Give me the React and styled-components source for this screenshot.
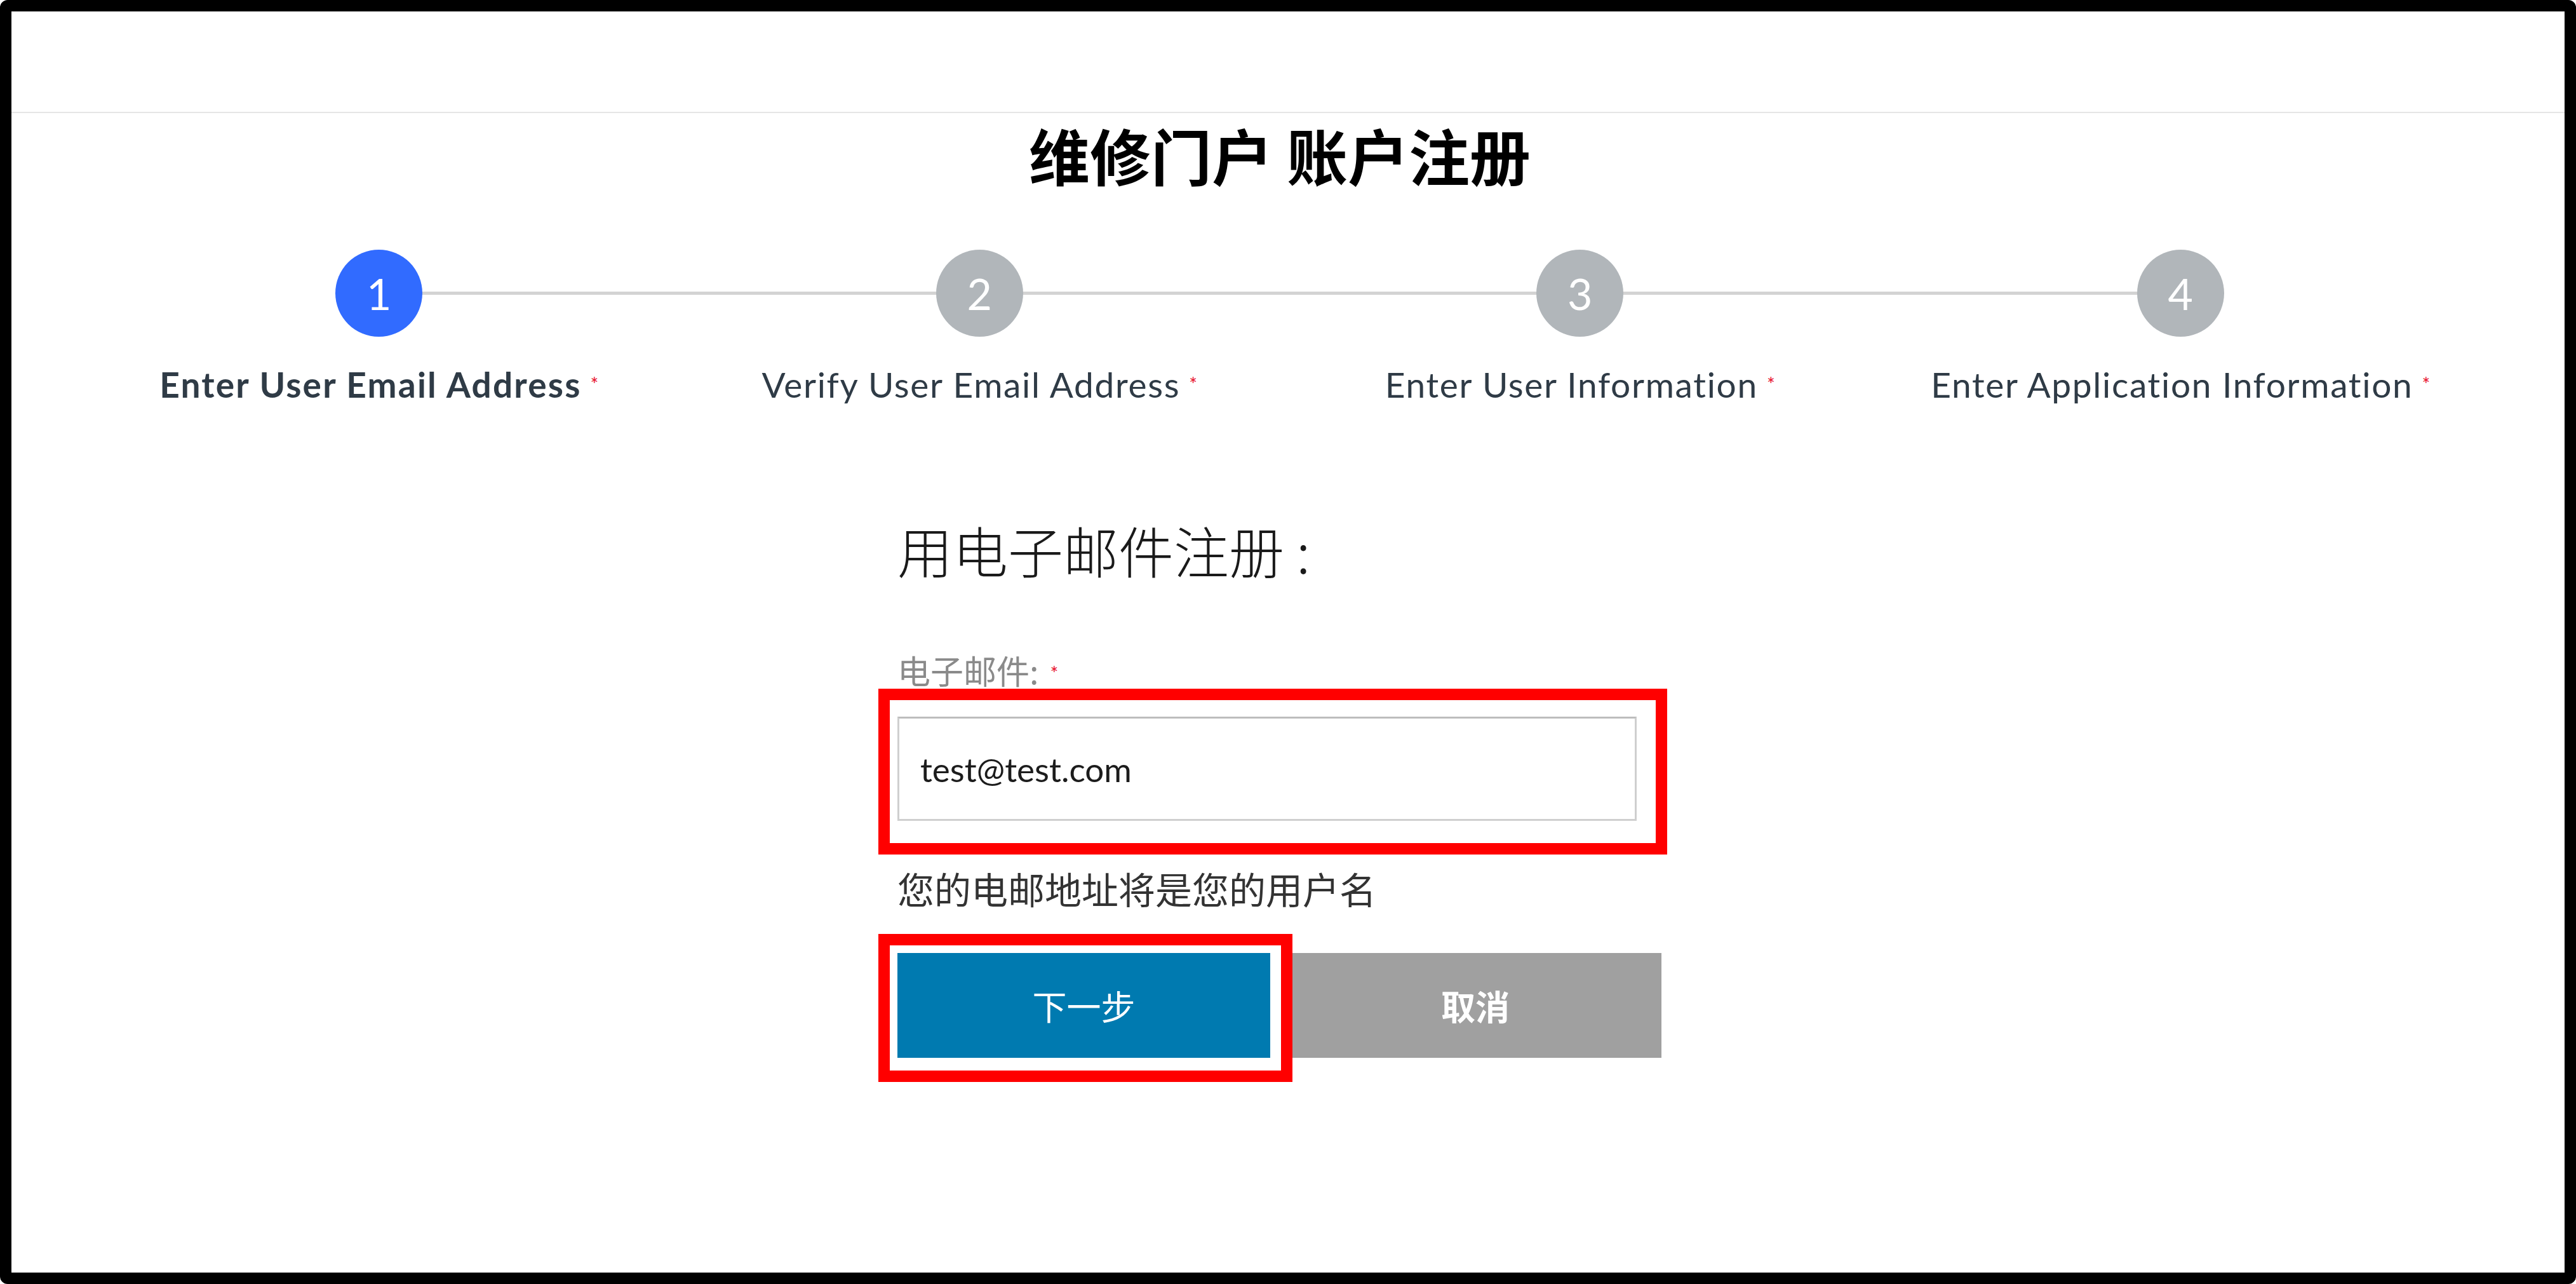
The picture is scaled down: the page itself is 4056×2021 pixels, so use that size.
import React from 'react';
import styled, { createGlobalStyle, css } from 'styled-components';

const colors = {
  frame: '#000000',
  divider: '#e6e6e6',
  text: '#1a1a1a',
  stepText: '#2f3b46',
  active: '#316bff',
  inactive: '#b1b6ba',
  track: '#d3d3d3',
  required: '#e8112d',
  muted: '#8a8a8a',
  primary: '#007ab0',
  secondary: '#a0a0a0',
  highlight: '#ff0000',
};

const cjk = `'Noto Sans CJK SC', 'Noto Sans', sans-serif`;
const latin = `Lato, 'Noto Sans CJK SC', sans-serif`;

const steps = [
  'Enter User Email Address',
  'Verify User Email Address',
  'Enter User Information',
  'Enter Application Information',
];

const GlobalStyle = createGlobalStyle`
  * {
    box-sizing: border-box;
  }

  html,
  body {
    margin: 0;
    padding: 0;
    background: #ffffff;
    overflow: hidden;
  }
`;

const App = () => (
  <>
    <GlobalStyle />
    <Frame>
      <TopBar />

      <Main>
        <Title>维修门户 账户注册</Title>

        <Stepper>
          {steps.map((label, index) => (
            <Step key={label} $first={index === 0} $last={index === steps.length - 1}>
              <Circle $active={index === 0}>{index + 1}</Circle>
              <StepLabel $active={index === 0}>
                {label}
                <Required>*</Required>
              </StepLabel>
            </Step>
          ))}
        </Stepper>

        <Form>
          <FormHeading>用电子邮件注册 :</FormHeading>

          <FieldLabel>
            电子邮件:
            <Required $field>*</Required>
          </FieldLabel>

          <Highlight $offset={47} $top={44} $right={48} $bottom={53} $left={30}>
            <EmailInput type='email' defaultValue='test@test.com' readOnly />
          </Highlight>

          <Hint>您的电邮地址将是您的用户名</Hint>

          <Buttons>
            <Highlight $top={30} $right={35} $bottom={38} $left={30}>
              <PrimaryButton type='button'>下一步</PrimaryButton>
            </Highlight>
            <SecondaryButton type='button'>取消</SecondaryButton>
          </Buttons>
        </Form>
      </Main>
    </Frame>
  </>
);

const Frame = styled.div`
  display: flex;
  flex-direction: column;
  width: 100vw;
  height: 100vh;
  border: 18px solid ${colors.frame};
  border-radius: 12px;
  background: #ffffff;
  overflow: hidden;
`;

const TopBar = styled.header`
  flex: none;
  height: 160px;
  border-bottom: 2px solid ${colors.divider};
`;

const Main = styled.main`
  display: flex;
  flex-direction: column;
  align-items: center;
  padding-right: 26px;
`;

const Title = styled.h1`
  margin: 17px 0 0;
  font-family: ${cjk};
  font-size: 96px;
  font-weight: 700;
  line-height: 1;
  color: #000000;
`;

const Stepper = styled.ol`
  display: grid;
  grid-template-columns: repeat(4, 1fr);
  width: 3782px;
  margin: 102px 0 0;
  padding: 0;
  list-style: none;
`;

const trackPart = css`
  content: '';
  position: absolute;
  top: 66px;
  height: 5px;
  background: ${colors.track};
  z-index: 0;
`;

const Step = styled.li`
  position: relative;
  display: flex;
  flex-direction: column;
  align-items: center;

  &::before {
    ${trackPart};
    left: 0;
    right: 50%;
    display: ${({ $first }) => ($first ? 'none' : 'block')};
  }

  &::after {
    ${trackPart};
    left: 50%;
    right: 0;
    display: ${({ $last }) => ($last ? 'none' : 'block')};
  }
`;

const Circle = styled.span`
  position: relative;
  z-index: 1;
  display: flex;
  align-items: center;
  justify-content: center;
  width: 137px;
  height: 137px;
  border-radius: 50%;
  background: ${({ $active }) => ($active ? colors.active : colors.inactive)};
  font-family: ${latin};
  font-size: 68px;
  color: #ffffff;
`;

const StepLabel = styled.span`
  margin-top: 42px;
  font-family: ${latin};
  font-size: 55px;
  font-weight: ${({ $active }) => ($active ? 700 : 400)};
  letter-spacing: ${({ $active }) => ($active ? '2.2px' : '1.7px')};
  line-height: 1.2;
  color: ${colors.stepText};
  white-space: nowrap;
`;

const Required = styled.span`
  position: relative;
  top: ${({ $field }) => ($field ? '-6px' : '-10px')};
  margin-left: ${({ $field }) => ($field ? '18px' : '14px')};
  font-family: ${latin};
  font-size: 30px;
  font-weight: 400;
  letter-spacing: 0;
  color: ${colors.required};
`;

const Form = styled.section`
  display: flex;
  flex-direction: column;
  align-items: flex-start;
  width: 1204px;
  margin-top: 184px;
`;

const FormHeading = styled.h2`
  margin: 0;
  font-family: ${cjk};
  font-size: 87px;
  font-weight: 300;
  line-height: 1;
  color: ${colors.text};
`;

const FieldLabel = styled.label`
  margin-top: 120px;
  font-family: ${cjk};
  font-size: 52px;
  line-height: 1;
  color: ${colors.muted};
`;

const Highlight = styled.div`
  position: relative;
  display: flex;
  margin-top: ${({ $offset = 0 }) => $offset}px;

  &::after {
    content: '';
    position: absolute;
    top: -${({ $top }) => $top}px;
    right: -${({ $right }) => $right}px;
    bottom: -${({ $bottom }) => $bottom}px;
    left: -${({ $left }) => $left}px;
    border: 18px solid ${colors.highlight};
    pointer-events: none;
    z-index: 2;
  }
`;

const EmailInput = styled.input`
  width: 1164px;
  height: 164px;
  padding: 0 33px;
  border: 3px solid #cfcfcf;
  border-top-color: #bdbdbd;
  border-radius: 0;
  font-family: ${latin};
  font-size: 53px;
  color: #1c1c1c;
  background: #ffffff;
  outline: none;
`;

const Hint = styled.p`
  margin: 77px 0 0;
  font-family: ${cjk};
  font-size: 58px;
  line-height: 1;
  color: #333333;
`;

const Buttons = styled.div`
  display: flex;
  gap: 30px;
  margin-top: 73px;
`;

const buttonBase = css`
  display: flex;
  align-items: center;
  justify-content: center;
  width: 587px;
  height: 165px;
  border: none;
  border-radius: 0;
  font-family: ${cjk};
  font-size: 54px;
  color: #ffffff;
  cursor: pointer;
`;

const PrimaryButton = styled.button`
  ${buttonBase};
  background: ${colors.primary};
  font-weight: 400;
`;

const SecondaryButton = styled.button`
  ${buttonBase};
  width: 586px;
  background: ${colors.secondary};
  font-weight: 700;
`;

export default App;
